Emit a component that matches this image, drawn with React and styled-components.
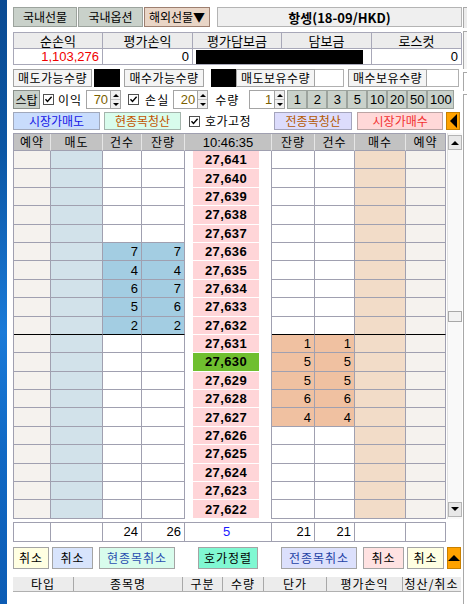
import React from 'react';
import styled, { createGlobalStyle } from 'styled-components';

const GlobalStyle = createGlobalStyle`
  html, body { margin: 0; padding: 0; background: #fff; }
  body {
    font-family: "Noto Sans CJK KR", "Liberation Sans", sans-serif;
    font-size: 12px;
    color: #000;
  }
  * { box-sizing: border-box; }
`;

const KR = `"Noto Sans CJK KR", "Liberation Sans", sans-serif`;
const NUM = `"Liberation Sans", "Noto Sans CJK KR", sans-serif`;

const Screen = styled.div`
  display: flex;
  width: 467px;
  height: 604px;
  overflow: hidden;
  background: #fff;
`;

const Desktop = styled.div`
  flex: none;
  width: 7px;
  background: linear-gradient(180deg, #0a4a92 0%, #0b56a4 25%, #1a7ad8 55%, #1068c4 75%, #0c5cb4 100%);
`;

const Window = styled.div`
  flex: none;
  width: 455px;
  padding: 7px 0 0 6px;
  display: flex;
  flex-direction: column;
`;

const RightEdge = styled.div`
  flex: none;
  width: 5px;
  padding-top: 7px;
  display: flex;
  flex-direction: column;
  gap: 3px;
`;

const EdgeBox = styled.div`
  height: ${p => p.$h}px;
  flex: ${p => (p.$grow ? 1 : 'none')};
  border-left: 1px solid #a8a8a8;
  border-top: 1px solid #a8a8a8;
  background: ${p => p.$bg || '#fff'};
  margin-left: 1px;
`;

const Row = styled.div`
  display: flex;
  align-items: center;
  height: ${p => p.$h}px;
  margin-top: ${p => p.$mt || 0}px;
  gap: ${p => p.$gap || 0}px;
  flex: none;
  white-space: nowrap;
`;

/* ---------- top tabs ---------- */
const Tab = styled.div`
  width: ${p => p.$w}px;
  height: 20px;
  display: flex;
  align-items: center;
  justify-content: center;
  background: ${p => (p.$active ? '#e9d5c6' : '#c9d1ca')};
  border: 1px solid ${p => (p.$active ? '#9d7f70' : '#9ca39d')};
  font-family: ${KR};
  font-size: 12px;
  line-height: 1;
`;

const Title = styled.div`
  flex: 1;
  margin-left: 6px;
  height: 20px;
  display: flex;
  align-items: center;
  justify-content: center;
  background: #efefef;
  border: 1px solid #b4b4b4;
  font-family: ${KR};
  font-weight: 700;
  font-size: 13px;
  line-height: 1;
`;

/* ---------- P&L table ---------- */
const InfoGrid = styled.div`
  display: grid;
  grid-template-columns: 89px 90px 89px 90px 90px;
  grid-auto-rows: 16px;
  width: 448px;
  margin-top: 5px;
  border-top: 1px solid #a8a8b8;
  border-left: 1px solid #a8a8b8;
`;

const InfoHead = styled.div`
  background: #ececec;
  border-right: 1px solid #a8a8b8;
  border-bottom: 1px solid #a8a8b8;
  display: flex;
  align-items: center;
  justify-content: center;
  font-family: ${KR};
  font-size: 13px;
  line-height: 1;
`;

const InfoVal = styled.div`
  grid-column: span ${p => p.$span || 1};
  background: #fff;
  border-right: 1px solid #a8a8b8;
  border-bottom: 1px solid #a8a8b8;
  display: flex;
  align-items: center;
  justify-content: flex-end;
  padding: 0 ${p => p.$pr ?? 3}px 0 ${p => p.$pl ?? 0}px;
  color: ${p => p.$color || '#000'};
  font-family: ${NUM};
  font-size: 13px;
  line-height: 1;
`;

const Redact = styled.div`
  width: ${p => (p.$w ? `${p.$w}px` : '100%')};
  height: ${p => p.$h || 14}px;
  background: #000;
  flex: ${p => (p.$w ? 'none' : 1)};
  margin-left: ${p => p.$ml || 0}px;
`;

/* ---------- quantity labels ---------- */
const LabelBox = styled.div`
  width: ${p => p.$w}px;
  height: 18px;
  display: flex;
  align-items: center;
  justify-content: center;
  background: #f4f4f4;
  border: 1px solid #a4a4a4;
  font-family: ${KR};
  font-size: 12px;
  letter-spacing: 0.5px;
  line-height: 1;
  margin-left: ${p => p.$ml || 0}px;
`;

const EmptyBox = styled.div`
  width: ${p => p.$w}px;
  height: 18px;
  background: #fff;
  border: 1px solid #b0b0b0;
  border-left: none;
`;

/* ---------- stop row ---------- */
const FlatButton = styled.div`
  width: ${p => p.$w}px;
  height: ${p => p.$h || 19}px;
  flex: none;
  display: flex;
  align-items: center;
  justify-content: center;
  background: ${p => p.$bg || '#c9d1ca'};
  border: 1px solid ${p => p.$bd || '#9ca39d'};
  color: ${p => p.$color || '#000'};
  font-family: ${p => (p.$num ? NUM : KR)};
  font-size: ${p => p.$fs || 12}px;
  line-height: 1;
  margin-left: ${p => p.$ml || 0}px;
`;

const CheckBox = styled.span`
  flex: none;
  width: 11px;
  height: 11px;
  border: 1px solid #505050;
  background: #fff;
  display: inline-flex;
  align-items: center;
  justify-content: center;
  margin-left: ${p => p.$ml || 0}px;
`;

const Label = styled.span`
  flex: none;
  white-space: nowrap;
  font-family: ${KR};
  font-size: 12px;
  line-height: 1;
  margin-left: ${p => p.$ml || 0}px;
  letter-spacing: ${p => p.$ls ?? 1}px;
`;

const NumInput = styled.div`
  width: ${p => p.$w}px;
  height: 19px;
  flex: none;
  margin-left: ${p => p.$ml || 0}px;
  border: 1px solid #a4a4a4;
  background: #fff;
  display: flex;
  align-items: center;
  justify-content: flex-end;
  padding-right: 2px;
  color: #7a6000;
  font-family: ${NUM};
  font-size: 13px;
  line-height: 1;
`;

const Spinner = styled.div`
  width: 10px;
  height: 19px;
  flex: none;
  display: flex;
  flex-direction: column;
  border: 1px solid #a4a4a4;
  border-left: none;
  background: #f0f0f0;
`;

const SpinHalf = styled.div`
  flex: 1;
  display: flex;
  align-items: center;
  justify-content: center;
  border-bottom: ${p => (p.$top ? '1px solid #c0c0c0' : 'none')};
`;

const Tri = ({ dir = 'up', size = 5, color = '#000' }) => {
  const pts = {
    up: '0,5 5,0 10,5',
    down: '0,0 10,0 5,5',
    left: '10,0 10,10 0,5',
  }[dir];
  const h = dir === 'left' ? size * 2 : size;
  const w = dir === 'left' ? size : size * 2;
  const vb = dir === 'left' ? '0 0 10 10' : '0 0 10 5';
  return (
    <svg width={w} height={h} viewBox={vb} preserveAspectRatio="none">
      <polygon points={pts} fill={color} />
    </svg>
  );
};

const Check = () => (
  <svg width="9" height="9" viewBox="0 0 9 9">
    <path d="M1.5 4.2 L3.5 6.4 L7.6 1.8" fill="none" stroke="#000" strokeWidth="1.4" />
  </svg>
);

const Spin = () => (
  <Spinner>
    <SpinHalf $top><Tri dir="up" size={3} /></SpinHalf>
    <SpinHalf><Tri dir="down" size={3} /></SpinHalf>
  </Spinner>
);

const NumButtons = styled.div`
  display: flex;
  margin-left: 2px;
`;

/* ---------- order book ---------- */
const BookWrap = styled.div`
  display: flex;
  margin-top: 3px;
  flex: none;
`;

const COLS = '37px 52px 39px 43px 87px 43px 40px 51px 40px';

const BookGrid = styled.div`
  display: grid;
  grid-template-columns: ${COLS};
  grid-template-rows: 17px;
  grid-auto-rows: 18.4px;
  width: 433px;
  border-top: 1px solid #a0a0b0;
  border-left: 1px solid #a0a0b0;
`;

const HeadCell = styled.div`
  background: #c2c2c2;
  border-right: 1px solid ${p => (p.$last ? '#a0a0b0' : '#e6e6e6')};
  border-bottom: 1px solid #a0a0b0;
  display: flex;
  align-items: center;
  justify-content: center;
  font-family: ${p => (p.$num ? NUM : KR)};
  font-size: ${p => (p.$num ? 13 : 12)}px;
  letter-spacing: ${p => (p.$num ? 0 : 1)}px;
  line-height: 1;
`;

const Cell = styled.div`
  background: ${p => p.$bg || '#fff'};
  border-right: 1px solid #a0a0b0;
  border-bottom: 1px solid ${p => (p.$divider ? '#000' : '#a0a0b0')};
  display: flex;
  align-items: center;
  justify-content: flex-end;
  padding-right: 3px;
  font-family: ${NUM};
  font-size: 13px;
  line-height: 1;
`;

const PriceCell = styled.div`
  background: #fff;
  border-right: 1px solid #a0a0b0;
  padding: 0 12px 1px 8px;
  display: flex;
`;

const PriceTag = styled.div`
  flex: 1;
  background: ${p => (p.$current ? '#6fbf2f' : '#ffd5d8')};
  display: flex;
  align-items: center;
  justify-content: center;
  font-family: ${NUM};
  font-weight: 700;
  font-size: 13px;
  letter-spacing: 0.4px;
  line-height: 1;
`;

const Scrollbar = styled.div`
  width: 15px;
  margin-left: 1px;
  display: flex;
  flex-direction: column;
  background: #f9f9f9;
  border-left: 1px solid #e2e2e2;
`;

const ScrollBtn = styled.div`
  height: 15px;
  flex: none;
  margin: ${p => (p.$bottom ? '0 0 2px 0' : '2px 0 0 0')};
  display: flex;
  align-items: center;
  justify-content: center;
  background: #e8e8e8;
  border: 1px solid #b4b4b4;
`;

const Thumb = styled.div`
  height: 11px;
  flex: none;
  margin-top: ${p => p.$top}px;
  background: #f2f2f2;
  border: 1px solid #a8a8a8;
`;

const Track = styled.div`
  flex: 1;
`;

/* ---------- totals ---------- */
const TotalGrid = styled.div`
  display: grid;
  grid-template-columns: ${COLS};
  grid-auto-rows: 19px;
  width: 433px;
  margin-top: 3px;
  border-top: 1px solid #a0a0b0;
  border-left: 1px solid #a0a0b0;
`;

const TotalCell = styled(Cell)`
  justify-content: ${p => (p.$center ? 'center' : 'flex-end')};
  color: ${p => p.$color || '#000'};
`;

/* ---------- bottom buttons ---------- */
const ActionRow = styled.div`
  display: flex;
  justify-content: space-between;
  align-items: center;
  width: 448px;
  height: 22px;
  margin-top: 5px;
`;

const Group = styled.div`
  display: flex;
  gap: ${p => p.$gap || 4}px;
  align-items: center;
`;

const ActionButton = styled.div`
  width: ${p => p.$w}px;
  height: 22px;
  flex: none;
  display: flex;
  align-items: center;
  justify-content: center;
  background: ${p => p.$bg};
  border: 1px solid #a4a4a4;
  color: ${p => p.$color || '#000'};
  font-family: ${KR};
  font-size: 12px;
  letter-spacing: 1px;
  line-height: 1;
  margin-left: ${p => p.$ml || 0}px;
  margin-right: ${p => p.$mr || 0}px;
`;

const OrangeButton = styled.div`
  width: ${p => p.$w || 14}px;
  height: ${p => p.$h || 19}px;
  flex: none;
  display: flex;
  align-items: center;
  justify-content: center;
  background: #ffa200;
  border: 1px solid #c88000;
  margin-left: ${p => p.$ml || 0}px;
`;

/* ---------- positions table ---------- */
const PosHeader = styled.div`
  display: grid;
  grid-template-columns: 61px 109px 40px 41px 63px 76px 58px;
  width: 448px;
  height: 15px;
  margin-top: 8px;
  background: #ececec;
  border-bottom: 1px solid #b0b0b0;
`;

const PosCell = styled.div`
  display: flex;
  align-items: center;
  justify-content: center;
  border-right: 1px solid ${p => (p.$last ? 'transparent' : '#a8a8a8')};
  font-family: ${KR};
  font-size: 12px;
  letter-spacing: 1px;
  line-height: 1;
`;

/* ---------- data ---------- */
const prices = Array.from({ length: 20 }, (_, i) => 27641 - i);
const sells = { 27636: [7, 7], 27635: [4, 4], 27634: [6, 7], 27633: [5, 6], 27632: [2, 2] };
const buys = { 27631: [1, 1], 27630: [5, 5], 27629: [5, 5], 27628: [6, 6], 27627: [4, 4] };
const CURRENT = 27630;
const fmt = n => n.toLocaleString('en-US');

const C = {
  reserve: '#f5f2ee',
  sell: '#d2e2ea',
  sellFill: '#a3cde2',
  buy: '#f2dcc8',
  buyFill: '#f0c1a1',
};

export default function App() {
  return (
    <Screen>
      <GlobalStyle />
      <Desktop />
      <Window>
        <Row $h={20} $gap={1}>
          <Tab $w={64}>국내선물</Tab>
          <Tab $w={65}>국내옵션</Tab>
          <Tab $w={66} $active>해외선물▼</Tab>
          <Title>항셍(18-09/HKD)</Title>
        </Row>

        <InfoGrid>
          <InfoHead>순손익</InfoHead>
          <InfoHead>평가손익</InfoHead>
          <InfoHead>평가담보금</InfoHead>
          <InfoHead>담보금</InfoHead>
          <InfoHead>로스컷</InfoHead>
          <InfoVal $color="#f00000">1,103,276</InfoVal>
          <InfoVal>0</InfoVal>
          <InfoVal $span={2} $pl={3} $pr={8}>
            <Redact $h={14} />
          </InfoVal>
          <InfoVal>0</InfoVal>
        </InfoGrid>

        <Row $h={18} $mt={4}>
          <LabelBox $w={79}>매도가능수량</LabelBox>
          <Redact $w={26} $h={18} $ml={2} />
          <LabelBox $w={80} $ml={4}>매수가능수량</LabelBox>
          <Redact $w={25} $h={18} $ml={7} />
          <LabelBox $w={79}>매도보유수량</LabelBox>
          <EmptyBox $w={29} />
          <LabelBox $w={79} $ml={4}>매수보유수량</LabelBox>
          <EmptyBox $w={32} />
        </Row>

        <Row $h={19} $mt={3}>
          <FlatButton $w={27} $bd="#8a908a">스탑</FlatButton>
          <CheckBox $ml={3}><Check /></CheckBox>
          <Label $ml={4}>이익</Label>
          <NumInput $w={25} $ml={4}>70</NumInput>
          <Spin />
          <CheckBox $ml={7}><Check /></CheckBox>
          <Label $ml={6}>손실</Label>
          <NumInput $w={25} $ml={4}>20</NumInput>
          <Spin />
          <Label $ml={7}>수량</Label>
          <NumInput $w={26} $ml={10}>1</NumInput>
          <Spin />
          <NumButtons>
            {['1', '2', '3', '5', '10', '20', '50'].map(n => (
              <FlatButton key={n} $w={20} $num $fs={13}>{n}</FlatButton>
            ))}
            <FlatButton $w={27} $num $fs={13}>100</FlatButton>
          </NumButtons>
        </Row>

        <Row $h={18} $mt={3}>
          <FlatButton $w={87} $h={18} $bg="#c8dcfc" $bd="#a0a8bc" $color="#1414e6">시장가매도</FlatButton>
          <FlatButton $w={77} $h={18} $ml={4} $bg="#d8fcec" $bd="#a4b4ac" $color="#c25400">현종목청산</FlatButton>
          <CheckBox $ml={8}><Check /></CheckBox>
          <Label $ml={5} $ls={0.5}>호가고정</Label>
          <FlatButton $w={78} $h={18} $ml={23} $bg="#dcdcfc" $bd="#a4a4bc" $color="#b45a00">전종목청산</FlatButton>
          <FlatButton $w={86} $h={18} $ml={5} $bg="#ffd8d8" $bd="#bca4a4" $color="#f23030">시장가매수</FlatButton>
          <OrangeButton $ml={3} $h={18}><Tri dir="left" size={7} /></OrangeButton>
        </Row>

        <BookWrap>
          <BookGrid>
            <HeadCell>예약</HeadCell>
            <HeadCell>매도</HeadCell>
            <HeadCell>건수</HeadCell>
            <HeadCell>잔량</HeadCell>
            <HeadCell $num>10:46:35</HeadCell>
            <HeadCell>잔량</HeadCell>
            <HeadCell>건수</HeadCell>
            <HeadCell>매수</HeadCell>
            <HeadCell $last>예약</HeadCell>
            {prices.map(p => {
              const s = sells[p];
              const b = buys[p];
              const div = p === 27632;
              return (
                <React.Fragment key={p}>
                  <Cell $bg={C.reserve} $divider={div} />
                  <Cell $bg={C.sell} $divider={div} />
                  <Cell $bg={s ? C.sellFill : '#fff'} $divider={div}>{s ? s[0] : ''}</Cell>
                  <Cell $bg={s ? C.sellFill : '#fff'} $divider={div}>{s ? s[1] : ''}</Cell>
                  <PriceCell>
                    <PriceTag $current={p === CURRENT}>{fmt(p)}</PriceTag>
                  </PriceCell>
                  <Cell $bg={b ? C.buyFill : '#fff'} $divider={div}>{b ? b[0] : ''}</Cell>
                  <Cell $bg={b ? C.buyFill : '#fff'} $divider={div}>{b ? b[1] : ''}</Cell>
                  <Cell $bg={C.buy} $divider={div} />
                  <Cell $bg={C.reserve} $divider={div} />
                </React.Fragment>
              );
            })}
          </BookGrid>
          <Scrollbar>
            <ScrollBtn><Tri dir="up" size={4} /></ScrollBtn>
            <Thumb $top={161} />
            <Track />
            <ScrollBtn $bottom><Tri dir="down" size={4} /></ScrollBtn>
          </Scrollbar>
        </BookWrap>

        <TotalGrid>
          <TotalCell />
          <TotalCell />
          <TotalCell>24</TotalCell>
          <TotalCell>26</TotalCell>
          <TotalCell $center $color="#1a1aff">5</TotalCell>
          <TotalCell>21</TotalCell>
          <TotalCell>21</TotalCell>
          <TotalCell />
          <TotalCell />
        </TotalGrid>

        <ActionRow>
          <Group $gap={3}>
            <ActionButton $w={36} $bg="#ffffe2">취소</ActionButton>
            <ActionButton $w={41} $bg="#d8e4fc">취소</ActionButton>
            <ActionButton $w={76} $ml={3} $bg="#d8fcec" $color="#2a4fb0">현종목취소</ActionButton>
          </Group>
          <ActionButton $w={60} $bg="#80f8d2">호가정렬</ActionButton>
          <Group $gap={3}>
            <ActionButton $w={76} $mr={3} $bg="#dce0fc" $color="#2442a6">전종목취소</ActionButton>
            <ActionButton $w={41} $bg="#ffe2e2">취소</ActionButton>
            <ActionButton $w={37} $bg="#ffffe2">취소</ActionButton>
            <OrangeButton $w={14} $h={22}><Tri dir="up" size={6} /></OrangeButton>
          </Group>
        </ActionRow>

        <PosHeader>
          <PosCell>타입</PosCell>
          <PosCell>종목명</PosCell>
          <PosCell>구분</PosCell>
          <PosCell>수량</PosCell>
          <PosCell>단가</PosCell>
          <PosCell>평가손익</PosCell>
          <PosCell $last>청산/취소</PosCell>
        </PosHeader>
      </Window>
      <RightEdge>
        <EdgeBox $h={21} $bg="#ececec" />
        <EdgeBox $h={38} $bg="#f4f4f4" />
        <EdgeBox $h={19} $bg="#fff" />
        <EdgeBox $grow $bg="#fff" />
      </RightEdge>
    </Screen>
  );
}
